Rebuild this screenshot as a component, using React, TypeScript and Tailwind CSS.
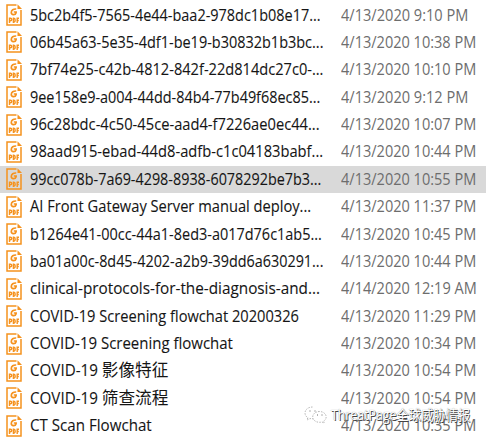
import { useLayoutEffect, useRef, useState } from "react";

type FileRow = {
  name: string;
  cjk?: string;
  width: number;
  date: string;
  dateWidth: number;
  selected?: boolean;
};

const files: FileRow[] = [
  { name: "5bc2b4f5-7565-4e44-baa2-978dc1b08e17...", width: 291, date: "4/13/2020 9:10 PM", dateWidth: 127 },
  { name: "06b45a63-5e35-4df1-be19-b30832b1b3bc...", width: 293, date: "4/13/2020 10:38 PM", dateWidth: 135 },
  { name: "7bf74e25-c42b-4812-842f-22d814dc27c0-...", width: 293, date: "4/13/2020 10:10 PM", dateWidth: 135 },
  { name: "9ee158e9-a004-44dd-84b4-77b49f68ec85...", width: 290, date: "4/13/2020 9:12 PM", dateWidth: 127 },
  { name: "96c28bdc-4c50-45ce-aad4-f7226ae0ec44...", width: 290, date: "4/13/2020 10:07 PM", dateWidth: 135 },
  { name: "98aad915-ebad-44d8-adfb-c1c04183babf...", width: 293, date: "4/13/2020 10:44 PM", dateWidth: 135 },
  { name: "99cc078b-7a69-4298-8938-6078292be7b3...", width: 291, date: "4/13/2020 10:55 PM", dateWidth: 135, selected: true },
  { name: "AI Front Gateway Server manual deploy...", width: 281, date: "4/13/2020 11:37 PM", dateWidth: 135 },
  { name: "b1264e41-00cc-44a1-8ed3-a017d76c1ab5...", width: 292, date: "4/13/2020 10:45 PM", dateWidth: 135 },
  { name: "ba01a00c-8d45-4202-a2b9-39dd6a630291...", width: 293, date: "4/13/2020 10:44 PM", dateWidth: 135 },
  { name: "clinical-protocols-for-the-diagnosis-and...", width: 290, date: "4/14/2020 12:19 AM", dateWidth: 136 },
  { name: "COVID-19 Screening flowchat 20200326", width: 269, date: "4/13/2020 11:29 PM", dateWidth: 135 },
  { name: "COVID-19 Screening flowchat", width: 203, date: "4/13/2020 10:34 PM", dateWidth: 135 },
  { name: "COVID-19 ", cjk: "影像特征", width: 138, date: "4/13/2020 10:54 PM", dateWidth: 135 },
  { name: "COVID-19 ", cjk: "筛查流程", width: 138, date: "4/13/2020 10:54 PM", dateWidth: 135 },
  { name: "CT Scan Flowchat", width: 122, date: "4/13/2020 10:35 PM", dateWidth: 135 },
];

function FitText({ text, cjk, width }: { text: string; cjk?: string; width: number }) {
  const ref = useRef<HTMLSpanElement>(null);
  const [scale, setScale] = useState(1);
  useLayoutEffect(() => {
    if (ref.current) setScale(width / ref.current.offsetWidth);
  }, [width]);
  return (
    <span
      ref={ref}
      className="inline-block origin-left whitespace-pre"
      style={{ transform: `scaleX(${scale})` }}
    >
      {text}
      {cjk && <span className="text-[17px] leading-none [-webkit-text-stroke:0]">{cjk}</span>}
    </span>
  );
}

function PdfIcon() {
  return (
    <svg className="h-[22px] w-4 shrink-0" viewBox="0 0 16 22" fill="none" stroke="#f5921e">
      <path d="M10.5 1H1v20h14V6" strokeWidth="1.5" />
      <path d="M11.5 .3v4.6H16z" fill="#f5921e" stroke="none" />
      <path d="M10.2 5C7.5 4.8 5.3 6.2 5.3 8.5c0 2.6 4 2.9 4.8.2V8H7.8" strokeWidth="1.7" />
      <path
        d="M3.5 19v-4.7h1c1.6 0 1.6 2.4 0 2.4h-1M7.4 14.3v4.1h.5c1.7 0 1.7-4.1 0-4.1zM13 14.3h-1.8v4.6M11.2 16.5h1.6"
        strokeWidth="1.4"
      />
    </svg>
  );
}

function WeChatMark() {
  return (
    <svg className="h-[18px] w-[23px] shrink-0" viewBox="0 0 23 18" fill="#fff" stroke="#999" strokeWidth=".7" strokeDasharray="1.5 1.2">
      <path d="M8.5 1C4.3 1 1 3.5 1 7c0 2 1 3.6 2.8 4.6L3 14l3-1.5c1 .3 2 .4 3 .3" />
      <path d="M15.5 5.5c-3.8 0-6.8 2.4-6.8 5.4s3 5.4 6.8 5.4c.8 0 1.7-.1 2.4-.4l2.3 1.2-.6-2c1.6-1 2.6-2.5 2.6-4.2 0-3-3-5.4-6.7-5.4z" />
      <path d="M5.5 5h1M10.5 5h1M13 9h1M17.5 9h1" stroke="#666" strokeWidth="1" strokeDasharray="none" />
    </svg>
  );
}

export default function App() {
  return (
    <main className="relative h-[438px] w-[486px] overflow-hidden bg-white pt-[1.4px] font-['Open_Sans','Noto_Sans_CJK_SC',sans-serif] text-[15.5px] leading-[27px]">
      <ul>
        {files.map((file) => (
          <li
            key={file.name + (file.cjk ?? "")}
            className={`flex h-[27.38px] items-center pl-1.5 ${file.selected ? "bg-[#d9d9d9]" : ""}`}
          >
            <PdfIcon />
            <div className="ml-[7.5px] w-[311.5px] shrink-0 text-[#151515] [-webkit-text-stroke:0.1px_#151515]">
              <FitText text={file.name} cjk={file.cjk} width={file.width} />
            </div>
            <div className="shrink-0 text-[#6d6d6d]">
              <FitText text={file.date} width={file.dateWidth} />
            </div>
          </li>
        ))}
      </ul>
      <div className="absolute top-[405px] left-[304px] flex items-center gap-1 text-[14px] leading-5 text-white [text-shadow:1px_1px_0_#444,0_0_1px_#888]">
        <WeChatMark />
        <FitText text="ThreatPage全球威胁情报" width={139} />
      </div>
    </main>
  );
}
